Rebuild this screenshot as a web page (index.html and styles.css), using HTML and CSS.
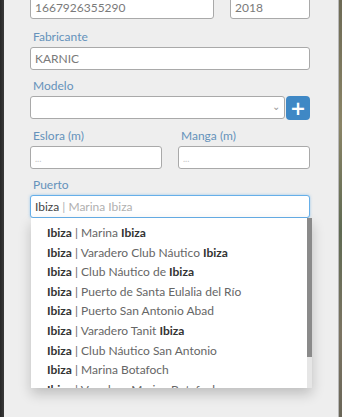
FILE: index.html
```html
<!DOCTYPE html>
<html>
<head>
	<title>Embarcación</title>
	<link rel="stylesheet" href="styles.css">
</head>
<body>
	<div class="edge-left"></div>
	<div class="panel">
		<div class="form">
			<div class="row">
				<input class="field-input wide" value="1667926355290">
				<input class="field-input year" value="2018">
			</div>

			<div class="field">
				<label>Fabricante</label>
				<input class="field-input" value="KARNIC">
			</div>

			<div class="field">
				<label>Modelo</label>
				<div class="select-row">
					<div class="select"><span class="chevron">&#8964;</span></div>
					<button class="add-btn">+</button>
				</div>
			</div>

			<div class="row">
				<div class="field half">
					<label>Eslora (m)</label>
					<input class="field-input" placeholder="...">
				</div>
				<div class="field half">
					<label>Manga (m)</label>
					<input class="field-input" placeholder="...">
				</div>
			</div>

			<div class="field puerto">
				<label>Puerto</label>
				<div class="field-input focus"><span class="typed">Ibiza</span><span class="hint"> | Marina Ibiza</span></div>
				<ul class="suggest">
					<li><b>Ibiza</b> | Marina <b>Ibiza</b></li>
					<li><b>Ibiza</b> | Varadero Club Náutico <b>Ibiza</b></li>
					<li><b>Ibiza</b> | Club Náutico de <b>Ibiza</b></li>
					<li><b>Ibiza</b> | Puerto de Santa Eulalia del Río</li>
					<li><b>Ibiza</b> | Puerto San Antonio Abad</li>
					<li><b>Ibiza</b> | Varadero Tanit <b>Ibiza</b></li>
					<li><b>Ibiza</b> | Club Náutico San Antonio</li>
					<li><b>Ibiza</b> | Marina Botafoch</li>
					<li><b>Ibiza</b> | Varadero Marina Botafoch</li>
				</ul>
				<div class="scrollbar"><div class="thumb"></div></div>
			</div>
		</div>
	</div>
	<div class="edge-right"></div>
</body>
</html>
```
FILE: styles.css
```css
body{
	margin: 0;
	padding: 0;
	display: flex;
	height: 417px;
	overflow: hidden;
	font-family: 'Lato', 'Liberation Sans', sans-serif;
	background: #2b2b2b;
}
.edge-left{
	width: 4px;
	background: linear-gradient(to right, #262626, #3a3a3a);
}
.panel{
	flex: 1;
	background: #eeeeee;
	padding: 0 28px 0 26px;
	border-right: 1px solid #b8b8b8;
}
.edge-right{
	width: 3px;
	background: linear-gradient(to bottom, #6d6a55, #8a8466 30%, #5f6a52 55%, #7b7462 80%, #6a6658);
}
.form{
	margin-top: -5px;
}
.row{
	display: flex;
	justify-content: space-between;
}
.field{
	margin-top: 8.5px;
}
.row:first-child + .field{
	margin-top: 9.5px;
}
.half{
	width: 132px;
}
label{
	display: block;
	color: #6592bb;
	font-size: 12px;
	line-height: 16px;
	padding-left: 3px;
	margin-bottom: 2px;
}
.field-input{
	display: block;
	box-sizing: border-box;
	width: 100%;
	height: 23px;
	margin: 0;
	padding: 0 4px;
	border: 1px solid #a9a9a9;
	border-radius: 3px;
	background: #fff;
	font-family: inherit;
	font-size: 12px;
	line-height: 21px;
	color: #7a7a7a;
	outline: none;
}
.field-input::placeholder{
	color: #c4c4c4;
	font-size: 9px;
}
.row:first-child .field-input{
	height: 24px;
}
.wide{
	width: 184px;
}
.year{
	width: 80px;
}
.select-row{
	display: flex;
	justify-content: space-between;
	align-items: flex-end;
}
.select{
	box-sizing: border-box;
	width: 255px;
	height: 23px;
	border: 1px solid #a9a9a9;
	border-radius: 3px;
	background: #fff;
	display: flex;
	justify-content: flex-end;
	align-items: center;
	padding-right: 4px;
}
.chevron{
	color: #999;
	font-size: 10px;
	line-height: 10px;
	margin-top: -4px;
}
.add-btn{
	width: 24px;
	height: 24px;
	padding: 0;
	margin-bottom: -1px;
	border: none;
	border-radius: 4px;
	background: #3f88c5;
	color: #fff;
	font-family: 'DejaVu Sans', sans-serif;
	font-size: 19px;
	font-weight: bold;
	line-height: 22px;
}
.puerto{
	position: relative;
}
.focus{
	border-color: #66afe9;
	box-shadow: 0 0 3px rgba(102, 175, 233, .6);
}
.typed{
	color: #444;
}
.hint{
	color: #b0b0b0;
}
.suggest{
	list-style: none;
	margin: 0 -2px 0 1px;
	padding: 5px 0 0 16px;
	height: 170px;
	overflow: hidden;
	box-sizing: border-box;
	background: #fff;
	box-shadow: 0 6px 12px rgba(0, 0, 0, .2);
	font-size: 12px;
	color: #666;
}
.suggest li{
	height: 19.6px;
	line-height: 19.6px;
	white-space: nowrap;
}
.suggest b{
	color: #333;
}
.scrollbar{
	position: absolute;
	right: -2px;
	bottom: 0;
	width: 5px;
	height: 170px;
	background: #e6e6e6;
}
.thumb{
	height: 139px;
	background: #8a8a8a;
}
```
